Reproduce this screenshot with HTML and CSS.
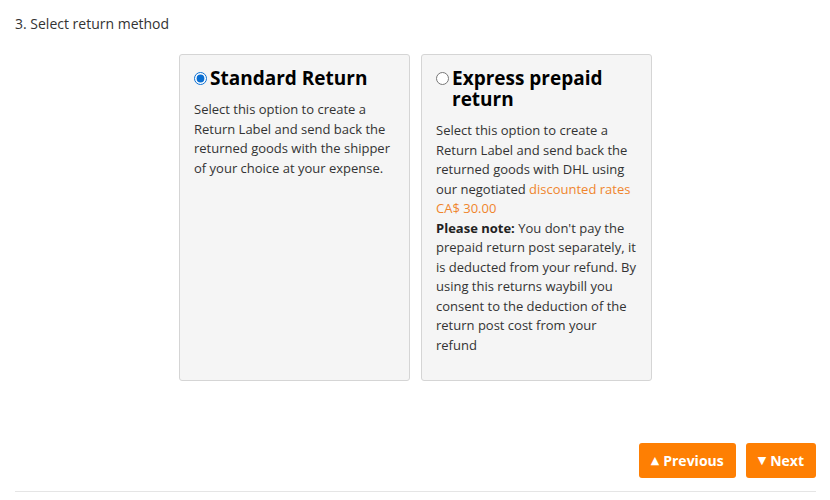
FILE: index.html
```html
<!DOCTYPE html>
<html lang="en">
<head>
<meta charset="utf-8">
<title>Select return method</title>
<link rel="stylesheet" href="styles.css">
</head>
<body>
<div class="page">
  <h2 class="step-title">3. Select return method</h2>
  <div class="options">
    <label class="card">
      <span class="card-title">
        <input type="radio" name="method" class="radio" checked>
        <span>Standard Return</span>
      </span>
      <p class="card-text">Select this option to create a Return Label and send back the returned goods with the shipper of your choice at your expense.</p>
    </label>
    <label class="card">
      <span class="card-title">
        <input type="radio" name="method" class="radio">
        <span>Express prepaid return</span>
      </span>
      <p class="card-text">Select this option to create a Return Label and send back the returned goods with DHL using our negotiated <span class="accent">discounted rates CA$&nbsp;30.00</span><br><strong>Please note:</strong> You don't pay the prepaid return post separately, it is deducted from your refund. By using this returns waybill you consent to the deduction of the return post cost from your refund</p>
    </label>
  </div>
  <div class="actions">
    <button class="btn" type="button"><span class="tri">▲</span>Previous</button>
    <button class="btn" type="button"><span class="tri">▼</span>Next</button>
  </div>
  <hr class="rule">
</div>
</body>
</html>
```

FILE: styles.css
```css
* { box-sizing: border-box; }
html, body { margin: 0; background: #fff; }
body {
  font-family: "Open Sans", "Liberation Sans", sans-serif;
  color: #333;
  font-size: 13px;
}
.page {
  width: 830px;
  padding: 14px 14px 0 15px;
}
.step-title {
  margin: 0;
  font-size: 14px;
  font-weight: 400;
  line-height: 20px;
  color: #333;
}
.options {
  display: flex;
  justify-content: center;
  gap: 11px;
  margin-top: 20px;
}
.card {
  width: 231px;
  background: #f5f5f5;
  border: 1px solid #d5d5d5;
  border-radius: 3px;
  padding: 13px 14px 12px;
  display: block;
}
.card-title {
  display: flex;
  align-items: flex-start;
  font-size: 19px;
  font-weight: 700;
  line-height: 21px;
  color: #000;
}
.radio {
  width: 13px;
  height: 13px;
  margin: 4px 3px 0 0;
  flex: none;
  accent-color: #0a6ed1;
}
.card-text {
  margin: 11px 0 13px;
  line-height: 19.5px;
  color: #333;
}
.card-text strong { color: #222; }
.accent { color: #f0852d; }
.actions {
  display: flex;
  justify-content: flex-end;
  gap: 10px;
  margin-top: 62px;
}
.btn {
  height: 35px;
  border: none;
  border-radius: 3px;
  background: #fe7f03;
  color: #fff;
  font-family: "Open Sans", "Liberation Sans", sans-serif;
  font-size: 14px;
  font-weight: 700;
  padding: 0 12px;
  display: flex;
  align-items: center;
}
.tri {
  font-family: "DejaVu Sans", sans-serif;
  font-size: 11px;
  margin-right: 4px;
}
.rule {
  margin: 13px 0 0;
  border: none;
  border-top: 1px solid #e5e5e5;
  height: 0;
}
```
